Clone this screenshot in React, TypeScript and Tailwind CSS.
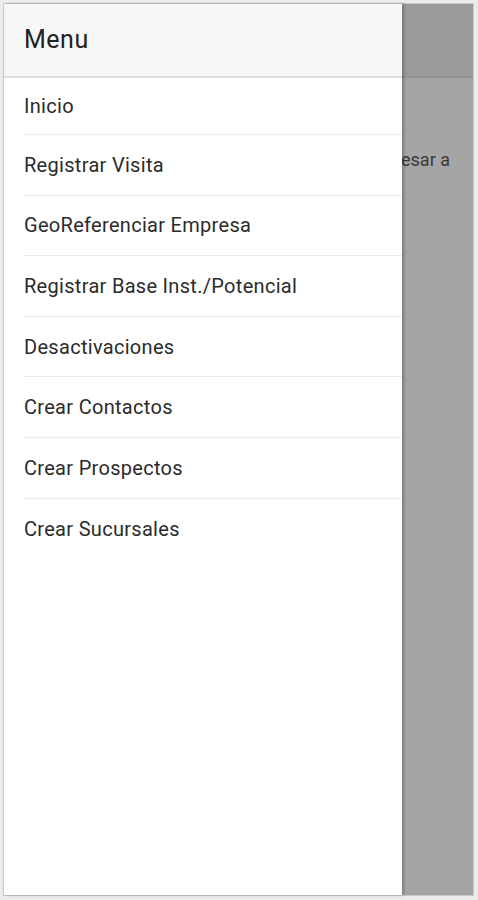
const ITEMS = [
  "Inicio",
  "Registrar Visita",
  "GeoReferenciar Empresa",
  "Registrar Base Inst./Potencial",
  "Desactivaciones",
  "Crear Contactos",
  "Crear Prospectos",
  "Crear Sucursales",
];

const font = { fontFamily: "Roboto, 'Noto Sans', sans-serif" };

export default function App() {
  return (
    <div
      className="w-[478px] h-[900px] bg-[#ececec] pt-[3px] pl-[3px] pr-[4px] pb-[4px]"
      style={font}
    >
      <div className="flex h-full border border-[#c8c8c8]">
        {/* drawer */}
        <div className="w-[398px] h-full bg-white flex flex-col shadow-[2px_0_3px_rgba(0,0,0,0.25)] z-10">
          <div className="h-[74px] shrink-0 bg-[#f7f7f7] border-b-2 border-[#dedede] flex items-center pl-[20px]">
            <span className="text-[25px] tracking-[0.5px] text-[#222]">Menu</span>
          </div>
          <div className="pl-[20px]">
            {ITEMS.map((item, i) => (
              <div
                key={item}
                className={`flex items-center ${i === 0 ? "h-[57px]" : "h-[60.6px]"} ${
                  i < ITEMS.length - 1 ? "border-b border-[#ebebeb]" : ""
                }`}
              >
                <span className="text-[20px] tracking-[0.3px] text-[#2b2b2b]">{item}</span>
              </div>
            ))}
          </div>
        </div>
        {/* scrim over page */}
        <div className="flex-1 h-full bg-[#a5a5a5] flex flex-col overflow-hidden">
          <div className="h-[74px] shrink-0 bg-[#9b9b9b] border-b-2 border-[#939393]" />
          <div className="pt-[68px] -ml-[1px] text-[18px] text-[#3a3a3a] whitespace-nowrap">
            esar a
          </div>
        </div>
      </div>
    </div>
  );
}
